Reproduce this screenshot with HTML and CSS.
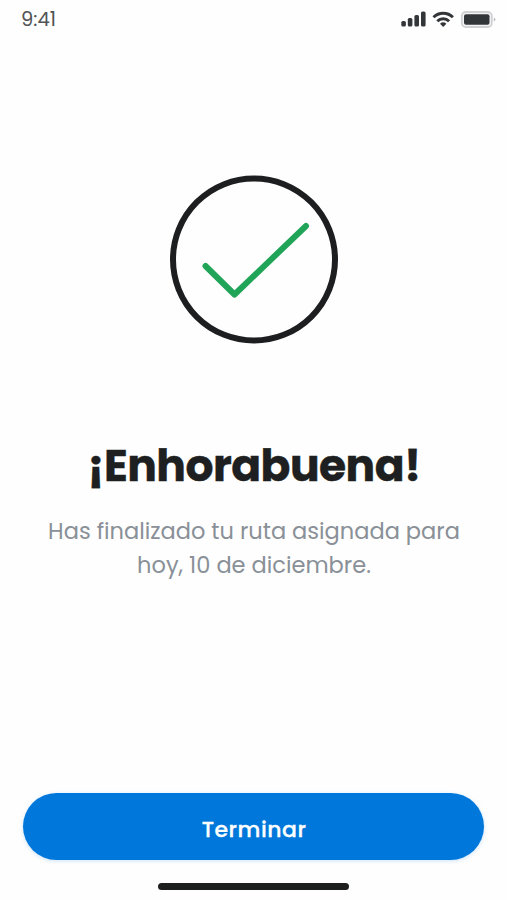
FILE: index.html
```html
<!DOCTYPE html>
<html lang="es">
<head>
    <meta charset="UTF-8">
    <meta name="viewport" content="width=device-width, initial-scale=1.0">
    <title>Ruta finalizada</title>
    <link rel="stylesheet" href="styles.css">
</head>
<body>
    <div class="screen">
        <header class="status-bar">
            <span class="time">9:41</span>
            <svg class="status-icons" width="96" height="18" viewBox="0 0 96 18" aria-hidden="true">
                <!-- signal -->
                <g fill="#333638">
                    <rect x="1.3" y="11" width="4.6" height="5.6" rx="1.6"/>
                    <rect x="7.8" y="8" width="4.6" height="8.6" rx="1.6"/>
                    <rect x="14.4" y="5" width="4.6" height="11.6" rx="1.6"/>
                    <rect x="21" y="1.5" width="4.6" height="15.1" rx="1.6"/>
                </g>
                <!-- wifi -->
                <g fill="none" stroke="#333638" stroke-width="3">
                    <path d="M33.5 7.2a13.8 13.8 0 0 1 19.4 0"/>
                    <path d="M37.3 11.2a8.3 8.3 0 0 1 11.8 0"/>
                </g>
                <path d="M40 13.7a4.8 4.8 0 0 1 6.4 0L43.2 17z" fill="#333638"/>
                <!-- battery -->
                <rect x="61.8" y="2" width="30" height="15" rx="4" fill="#f4f4f5" stroke="#cfd1d4" stroke-width="1.8"/>
                <rect x="64" y="4.3" width="25.5" height="10.5" rx="2" fill="#333638"/>
                <path d="M93.8 7.5q3.2 2 0 4z" fill="#b5b8bb"/>
            </svg>
        </header>

        <main class="content">
            <svg class="check" width="170" height="170" viewBox="0 0 170 170" aria-hidden="true">
                <circle cx="85" cy="85.5" r="81" fill="none" stroke="#1d1e1f" stroke-width="6"/>
                <path d="M36.5 92L65.5 120.5L137 52" fill="none" stroke="#20a457" stroke-width="6" stroke-linecap="round" stroke-linejoin="round"/>
            </svg>
            <h1 class="title">¡Enhorabuena!</h1>
            <p class="message">Has finalizado tu ruta asignada para<br><span class="date">hoy, 10 de diciembre.</span></p>
        </main>

        <footer class="footer">
            <button class="button">Terminar</button>
            <div class="home-bar"></div>
        </footer>
    </div>
</body>
</html>
```

FILE: styles.css
```css
* {
    box-sizing: border-box;
}
body {
    margin: 0;
    background-color: #fefefe;
    font-family: Poppins, Inter, sans-serif;
}
.screen {
    display: flex;
    flex-direction: column;
    height: 900px;
    max-width: 507px;
    margin: 0 auto;
}
.status-bar {
    display: flex;
    justify-content: space-between;
    height: 38px;
    padding: 10px 11px 0 21px;
}
.time {
    color: #505254;
    font-size: 19.5px;
    line-height: 20px;
}
.content {
    display: flex;
    flex-direction: column;
    align-items: center;
    flex: 1;
    padding: 136px 0 0 1px;
}
.check {
    display: block;
}
.title {
    margin: 92px 0 0;
    color: #1d1f20;
    font-size: 44px;
    font-weight: 700;
    line-height: 60px;
    letter-spacing: -0.55px;
    -webkit-text-stroke: 0.4px #1d1f20;
}
.message {
    margin: 18px 0 0;
    color: #899097;
    font-size: 22.5px;
    line-height: 34px;
    text-align: center;
    white-space: nowrap;
}
.footer {
    display: flex;
    flex-direction: column;
    align-items: center;
    padding: 0 23px 10px;
}
.button {
    width: 461px;
    height: 67px;
    padding: 5px 0 0 1px;
    border: none;
    border-radius: 34px;
    background-color: #0077da;
    box-shadow: 0 1px 4px rgba(0, 119, 218, 0.2);
    color: #fff;
    font-family: inherit;
    font-size: 22px;
    font-weight: 500;
    letter-spacing: 0.5px;
    -webkit-text-stroke: 0.3px #fff;
    cursor: pointer;
}
.home-bar {
    width: 191px;
    height: 7px;
    margin-top: 23px;
    border-radius: 4px;
    background-color: #1d1f1e;
}
```
